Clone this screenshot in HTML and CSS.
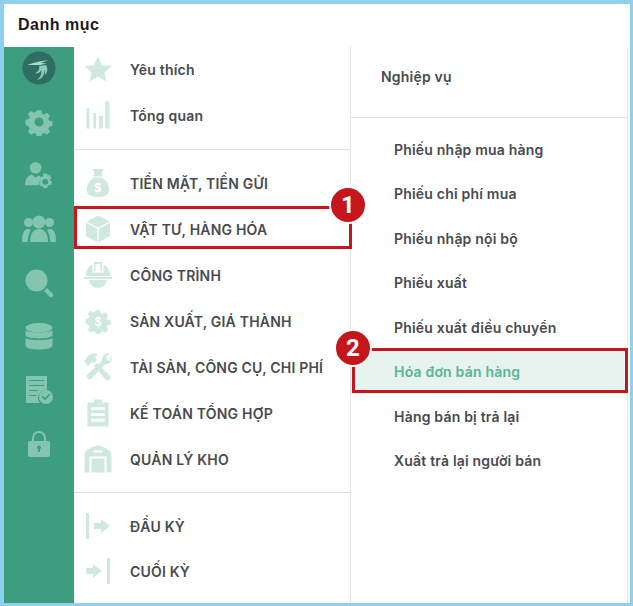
FILE: index.html
```html
<!DOCTYPE html>
<html lang="vi">
<head>
<meta charset="utf-8">
<title>Danh mục</title>
<link rel="stylesheet" href="styles.css">
</head>
<body>
<svg class="defs" width="0" height="0">
  <defs>
    <symbol id="gear" viewBox="0 0 28 28"><path fill-rule="evenodd" d="M11.500 1h5l.8 3.600 2.400 1 3.100-2 3.500 3.500-2 3.100 1 2.400 3.700.8v5l-3.700.8-1 2.400 2 3.100-3.500 3.500-3.100-2-2.400 1-.8 3.700h-5l-.8-3.700-2.400-1-3.100 2-3.500-3.500 2-3.100-1-2.400L-1 16.500v-5l3.700-.8 1-2.400-2-3.100 3.500-3.500 3.100 2 2.400-1zM14 9a5 5 0 1 0 0 10 5 5 0 0 0 0-10z" transform="translate(1.400 1.400) scale(.9)"/></symbol>
    <symbol id="gear-solid" viewBox="0 0 28 28"><path d="M11.500 1h5l.8 3.600 2.400 1 3.100-2 3.500 3.500-2 3.100 1 2.400 3.700.8v5l-3.700.8-1 2.400 2 3.100-3.500 3.500-3.100-2-2.400 1-.8 3.700h-5l-.8-3.700-2.400-1-3.100 2-3.500-3.500 2-3.100-1-2.400L-1 16.500v-5l3.700-.8 1-2.400-2-3.100 3.500-3.500 3.100 2 2.400-1z" transform="translate(1.400 1.400) scale(.9)"/></symbol>
  </defs>
</svg>
<div class="frame">
  <header class="title">Danh mục</header>
  <div class="body">
    <nav class="rail">
      <div class="rail-item rail-logo">
        <svg class="logo" width="34" height="34" viewBox="0 0 34 34"><circle cx="17" cy="17" r="16.500" fill="#2f6d62"/><path d="M5 14c6-2 12-4 22-5-3 1-6 2-8 3l6 .5-7 1.500c-4 0-8 0-13 0z" fill="#a9d8c6"/><path d="M17 15c1 3-1 6-4 7 2 1 5 0 6-3 1 3 0 7-4 10 5-1 8-5 7-10 1 1 1 3 1 5 3-3 3-7 1-10z" fill="#8fcab6"/></svg>
      </div>
      <div class="rail-item">
        <svg class="rail-icon" width="28" height="28" viewBox="0 0 28 28"><use href="#gear"/></svg>
      </div>
      <div class="rail-item">
        <svg class="rail-icon" width="31" height="27" viewBox="0 0 32 28"><circle cx="13" cy="6" r="6"/><path d="M2 24c0-6 3-10 7-11l4 3 3-2c1 .5 2 1 2.500 2L16 24z"/><path fill-rule="evenodd" d="M21 12h4l.5 2 2-.5 2 3-1.500 1.500.5 1.500 1.500 1-1 3.500-2-.5-1.500 1.500-.5 2h-4l-.5-2-2 .5-2-3 1.500-1.500V20l-1.500-1.500 2-3.500 2 .5zm2 5.500a3 3 0 1 0 0 6 3 3 0 0 0 0-6z"/></svg>
      </div>
      <div class="rail-item">
        <svg class="rail-icon" width="34" height="27" viewBox="0 0 34 27"><circle cx="17" cy="7" r="6.500"/><circle cx="6.500" cy="7.500" r="4.500"/><circle cx="27.500" cy="7.500" r="4.500"/><path d="M8 27c0-9 4-13 9-13s9 4 9 13z"/><path d="M0 27c0-8 2-13 6-13 1 0 2 .5 3 1-2 3-3 7-3.500 12zM34 27c0-8-2-13-6-13-1 0-2 .5-3 1 2 3 3 7 3.500 12z"/></svg>
      </div>
      <div class="rail-item">
        <svg class="rail-icon" width="28" height="28" viewBox="0 0 28 28"><circle cx="11.500" cy="11.500" r="11"/><path d="M19 22l3-3 6 6c1 2-1 4-3 3z"/></svg>
      </div>
      <div class="rail-item">
        <svg class="rail-icon" width="28" height="27" viewBox="0 0 28 28"><ellipse cx="14" cy="5" rx="14" ry="5"/><path d="M0 7.500c3 3 25 3 28 0V13c-3 4-25 4-28 0zM0 15.500c3 3 25 3 28 0V23c0 6-28 6-28 0z"/></svg>
      </div>
      <div class="rail-item">
        <svg class="rail-icon" width="28" height="28" viewBox="0 0 28 28"><path fill-rule="evenodd" d="M1 0h21v14a8 8 0 0 0-7 13H1zM4 4v1h15V4zm0 5v1h15V9zm0 5v1h9v-1zm0 5v1h7v-1z"/><path fill-rule="evenodd" d="M21 14a7 7 0 1 1 0 14 7 7 0 0 1 0-14zm3.500 3.500L20 22l-2.500-2.300-1 1.200 3.500 3.300 5.500-5.600z"/></svg>
      </div>
      <div class="rail-item">
        <svg class="rail-icon" width="22" height="27" viewBox="0 0 22 27"><path fill-rule="evenodd" d="M4 11V8a7 7 0 0 1 14 0v3h2a2 2 0 0 1 2 2v12a2 2 0 0 1-2 2H2a2 2 0 0 1-2-2V13a2 2 0 0 1 2-2zm2 0h10V8a5 5 0 0 0-10 0zM11 15.500a2 2 0 0 0-1 3.700V22h2v-2.800a2 2 0 0 0-1-3.700z"/></svg>
      </div>
    </nav>

    <section class="menu">
      <div class="group group-top">
        <div class="row">
          <svg class="row-icon" width="27" height="25" viewBox="0 0 28 26"><path d="M14 0l4.200 9 9.800 1-7.300 6.700 2.100 9.300-8.800-5-8.800 5 2.100-9.300L0 10l9.800-1z"/></svg>
          <span class="row-label">Yêu thích</span>
        </div>
        <div class="row">
          <svg class="row-icon" width="23" height="27" viewBox="0 0 24 28"><path d="M0 7h3v21H0zM7 12h3v16H7zM13 15h4v13h-4zM19.500 0H24v28h-4.500z"/></svg>
          <span class="row-label">Tổng quan</span>
        </div>
      </div>
      <div class="group">
        <div class="row">
          <svg class="row-icon" width="23" height="28" viewBox="0 0 24 30"><path d="M6 0h12l-3 6h2v2H7V6h2zM8 9h8c5 3 8 8 8 13 0 6-4 8-12 8S0 28 0 22c0-5 3-10 8-13z"/><text class="icon-sign" x="12" y="25" text-anchor="middle">$</text></svg>
          <span class="row-label">TIỀN MẶT, TIỀN GỬI</span>
        </div>
        <div class="row">
          <svg class="row-icon" width="24" height="27" viewBox="0 0 24 27"><path d="M12 0l12 6.500v14L12 27 0 20.500v-14z"/><path class="icon-cut" d="M0 6.500l12 6.500 12-6.500M12 13v14"/></svg>
          <span class="row-label">VẬT TƯ, HÀNG HÓA</span>
        </div>
        <div class="row">
          <svg class="row-icon" width="28" height="26" viewBox="0 0 28 26"><path d="M10 0h8v9h-1.500V2h-5v7H10zM8.500 2.500v8h11v-8c4 1.500 6.500 6 6.500 11.500H2C2 8.500 4.500 4 8.500 2.500zM0 15h28v2H0zM5 18h18c-1 5-5 8-9 8s-8-3-9-8z"/></svg>
          <span class="row-label">CÔNG TRÌNH</span>
        </div>
        <div class="row">
          <svg class="row-icon" width="26" height="26" viewBox="0 0 28 28"><use href="#gear-solid"/><text class="icon-sign" x="14" y="19" text-anchor="middle">$</text></svg>
          <span class="row-label">SẢN XUẤT, GIÁ THÀNH</span>
        </div>
        <div class="row">
          <svg class="row-icon" width="28" height="28" viewBox="0 0 28 28"><path d="M0 8l5-6c3-2 7-2 9 0l-3 1 2 4-3 3-2-1-4 4zM10 13l3-3 13 13c1 3-1 5-4 4z"/><path d="M27 2c1 3 1 6-1 8-2 1-4 1-5 1L7 26c-2 1-5-1-4-4l15-14c0-2 0-4 2-6s4-2 6-2l-4 4 1 3 3 1z"/></svg>
          <span class="row-label">TÀI SẢN, CÔNG CỤ, CHI PHÍ</span>
        </div>
        <div class="row">
          <svg class="row-icon" width="22" height="27" viewBox="0 0 22 28"><path fill-rule="evenodd" d="M7 0h8v3h7v25H0V3h7zM4 8v3h14V8zm0 6v3h14v-3zm0 6v3h14v-3z"/></svg>
          <span class="row-label">KẾ TOÁN TỔNG HỢP</span>
        </div>
        <div class="row">
          <svg class="row-icon" width="27" height="27" viewBox="0 0 27 27"><path fill-rule="evenodd" d="M13.500 0C20 1 27 5 27 9v18h-5V11H5v16H0V9c0-4 7-8 13.500-9zM9 5v2h9V5z"/><path d="M7 13h13v14H7z"/></svg>
          <span class="row-label">QUẢN LÝ KHO</span>
        </div>
      </div>
      <div class="group group-end">
        <div class="row">
          <svg class="row-icon" width="24" height="26" viewBox="0 0 24 26"><path d="M0 0h3v26H0zM8 10h7V6l9 7-9 7v-4H8z"/></svg>
          <span class="row-label">ĐẦU KỲ</span>
        </div>
        <div class="row">
          <svg class="row-icon" width="24" height="26" viewBox="0 0 24 26"><path d="M21 0h3v26h-3zM0 10h7V6l9 7-9 7v-4H0z"/></svg>
          <span class="row-label">CUỐI KỲ</span>
        </div>
      </div>
      <div class="mark mark-one"></div>
      <span class="badge badge-one">1</span>
    </section>

    <section class="detail">
      <div class="detail-head">Nghiệp vụ</div>
      <ul class="detail-list">
        <li>Phiếu nhập mua hàng</li>
        <li>Phiếu chi phí mua</li>
        <li>Phiếu nhập nội bộ</li>
        <li>Phiếu xuất</li>
        <li>Phiếu xuất điều chuyển</li>
        <li class="is-active">Hóa đơn bán hàng</li>
        <li>Hàng bán bị trả lại</li>
        <li>Xuất trả lại người bán</li>
      </ul>
      <div class="mark mark-two"></div>
      <span class="badge badge-two">2</span>
    </section>
  </div>
</div>
</body>
</html>
```
FILE: styles.css
```css
* { box-sizing: border-box; }
html, body { margin: 0; height: 100%; }
body {
  width: 633px;
  height: 606px;
  overflow: hidden;
  background: #8fd0ea;
  font-family: Inter, "Liberation Sans", sans-serif;
}
.defs { position: absolute; }
.frame {
  margin: 4px 3px 3px 4px;
  height: 599px;
  background: #fff;
  display: flex;
  flex-direction: column;
}
.title {
  height: 43px;
  flex: none;
  padding: 12px 0 0 14px;
  font-family: "Liberation Sans", sans-serif;
  font-size: 16px;
  line-height: 17px;
  font-weight: 700;
  letter-spacing: .5px;
  color: #1a1a1a;
}
.body { flex: 1; display: flex; min-height: 0; }
.rail {
  width: 70px;
  flex: none;
  background: #3c9e7f;
  display: flex;
  flex-direction: column;
}
.rail-item {
  height: 53.7px;
  flex: none;
  display: flex;
  align-items: center;
  justify-content: center;
  margin-left: -1px;
}
.rail-logo { margin-top: -6px; }
.rail-icon { fill: #84c5b0; overflow: visible; }
.menu {
  position: relative;
  width: 277px;
  flex: none;
  border-right: 1px solid #e2e2e2;
}
.group { padding: 10.500px 0 9.500px; border-bottom: 1px solid #e2e2e2; }
.group-top { margin-top: -1px; padding: 0; height: 103.500px; }
.group-end { border-bottom: 0; padding-top: 11px; }
.group-end .row { height: 45px; }
.row {
  height: 46px;
  display: flex;
  align-items: center;
  position: relative;
  padding-left: 56px;
}
.row-icon {
  position: absolute;
  left: 24px;
  top: 50%;
  transform: translate(-50%, -50%);
  fill: #cfe9e1;
  overflow: visible;
}
.icon-cut { fill: none; stroke: #fff; stroke-width: 1.200; }
.row-label {
  font-size: 14px;
  font-weight: 600;
  letter-spacing: .2px;
  color: #484b4e;
  white-space: nowrap;
}
.icon-sign { font: 700 13px "Liberation Sans", sans-serif; fill: #fff; }
.detail { position: relative; flex: 1; border-right: 1px solid #e8e8e8; margin-right: 2px; }
.detail-head {
  height: 71px;
  padding: 0 0 12px 30px;
  display: flex;
  align-items: center;
  border-bottom: 1px solid #e2e2e2;
  font-size: 14px;
  font-weight: 600;
  letter-spacing: .2px;
  color: #484b4e;
}
.detail-list {
  list-style: none;
  margin: 0;
  padding: 9px 0 0;
}
.detail-list li {
  height: 44.500px;
  display: flex;
  align-items: center;
  padding-left: 43px;
  font-size: 14px;
  font-weight: 600;
  letter-spacing: .2px;
  color: #484b4e;
}
.detail-list .is-active { background: #e6f3ef; color: #5ab597; }
.mark { position: absolute; border: 3px solid #c5161d; pointer-events: none; }
.mark-one { left: 0; top: 159px; width: 278px; height: 43px; }
.mark-two { left: 1px; top: 301px; width: 276px; height: 45px; }
.badge {
  position: absolute;
  width: 38px;
  height: 38px;
  border-radius: 50%;
  background: #c5161d;
  border: 2px solid #fff;
  color: #fff;
  font: 700 24px/34px Roboto, sans-serif;
  text-align: center;
}
.badge-one { left: 255px; top: 139px; }
.badge-two { left: -17px; top: 282px; }
```
